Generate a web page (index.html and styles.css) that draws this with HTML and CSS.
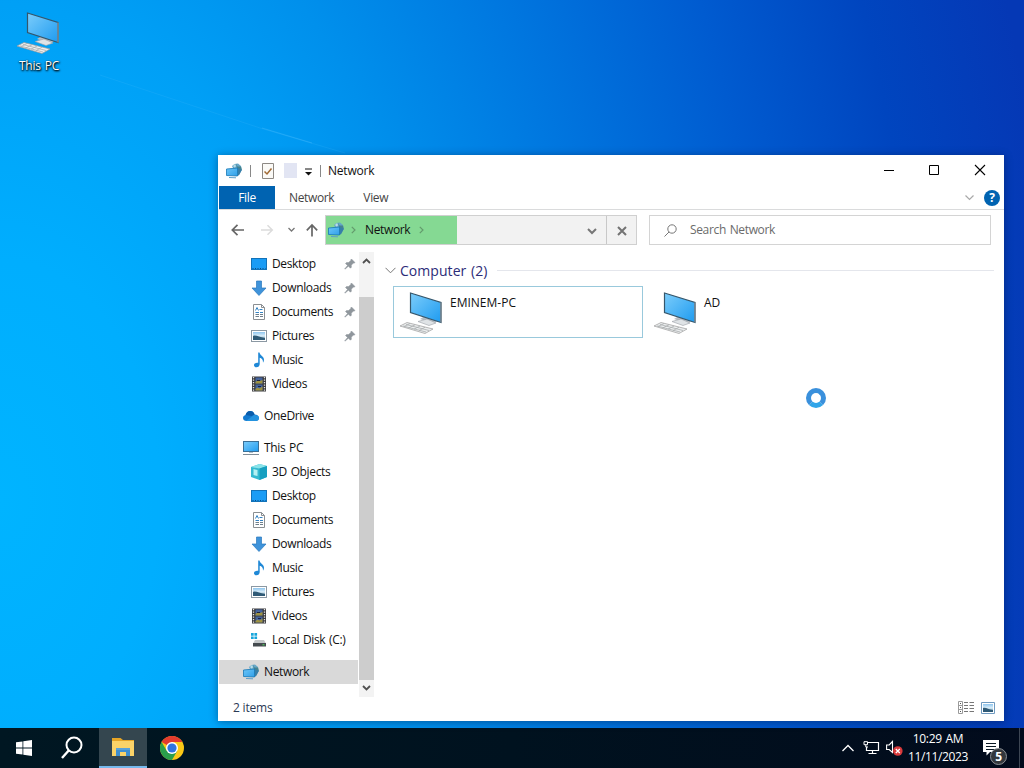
FILE: index.html
```html
<!DOCTYPE html>
<html lang="en">
<head>
  <meta charset="utf-8">
  <title>Network</title>
  <link rel="stylesheet" href="styles.css">
</head>
<body>
  <!-- shared icons -->
  <svg class="defs" width="0" height="0">
    <defs>
      <linearGradient id="screen" x1="0" y1="0" x2="1" y2="1">
        <stop offset="0" stop-color="#7ccdfb"/>
        <stop offset="1" stop-color="#1e9bf0"/>
      </linearGradient>
      <linearGradient id="glass" x1="0" y1="0" x2="1" y2="1">
        <stop offset="0" stop-color="#6cc6f8"/>
        <stop offset="1" stop-color="#2f9fe9"/>
      </linearGradient>
      <linearGradient id="sky" x1="0" y1="0" x2="0" y2="1">
        <stop offset="0" stop-color="#8fc5ee"/>
        <stop offset="0.5" stop-color="#dceffa"/>
        <stop offset="1" stop-color="#3c6f8c"/>
      </linearGradient>
    </defs>
    <symbol id="i-pc" viewBox="0 0 44 44">
      <path d="M20 28l13 4.500 4-2-13-5z" fill="#b9bfc5"/>
      <path d="M18 30.500l11 4 7-2.500-9-4z" fill="#dfe3e6" stroke="#9aa0a6" stroke-width=".6"/>
      <path d="M0 35l7-3.500 26 6.500-8 4.500z" fill="#eceeef" stroke="#9b9b9b" stroke-width=".7"/>
      <path d="M3 35l23 6M6 33.500l23 6M10 32.500l-6 3M15 33.800l-6 3M20 35l-6 3.200M25 36.200l-6 3.500" stroke="#aaadaf" stroke-width=".8" fill="none"/>
      <path d="M10.500 2L41 11.500v20L10.500 21.500z" fill="url(#screen)" stroke="#35566b" stroke-width="1.200"/>
      <path d="M41 11.500v20" stroke="#7f8c94" stroke-width="1.400"/>
    </symbol>
    <symbol id="i-network" viewBox="0 0 16 16">
      <path d="M6 3l2.500-2L12 .5 15 3l.8 4-2.800 4.500L9 9z" fill="#66a7c8"/>
      <path d="M10 .5l1.500 3L15 3.500l.8 3.500-2.800 1-2-3z" fill="#46848f"/>
      <path d="M7 3l2-2 1 2-1 2z" fill="#b9dde8"/>
      <path d="M11.500 4.500L15.800 7l-2.600 5-1.700 1z" fill="#377fa9"/>
      <path d="M.5 6l11-1v8l-11-.5z" fill="url(#glass)" stroke="#1677b5" stroke-width=".8"/>
      <path d="M3 14.500l7 .3" stroke="#5d9fc9" stroke-width="1"/>
    </symbol>
    <symbol id="i-desktop" viewBox="0 0 16 16">
      <rect x=".5" y="2.500" width="15" height="11" fill="#1a9cf5" stroke="#1272b8"/>
      <path d="M1.500 12.500h13" stroke="#0c4f86" stroke-dasharray="1 1.500"/>
    </symbol>
    <symbol id="i-downloads" viewBox="0 0 16 16">
      <path d="M5.500 1h5v7H15l-7 7.500L1 8h4.500z" fill="#3f93da" stroke="#2a79bd" stroke-width=".7"/>
    </symbol>
    <symbol id="i-documents" viewBox="0 0 16 16">
      <path d="M2.500.5h8l3 3v12h-11z" fill="#fff" stroke="#8b8f92"/>
      <path d="M10.500.5v3h3" fill="none" stroke="#8b8f92"/>
      <path d="M4.500 6.500L6 3.500l1.500 3M8.500 5.500h3M4.500 8.500h3.500M9 8.500h3" stroke="#3383c4" fill="none"/>
      <path d="M4.500 10.500h3.500M9 10.500h3M4.500 12.500h3.500M9 12.500h3" stroke="#6f7f8b" fill="none"/>
    </symbol>
    <symbol id="i-pictures" viewBox="0 0 16 16">
      <rect x=".5" y="2.500" width="15" height="11" fill="#fff" stroke="#8b98a3"/>
      <rect x="2" y="4" width="12" height="8" fill="url(#sky)"/>
      <path d="M2 8c3-1.500 6 1.500 12 2v2H2z" fill="#2f5a76"/>
    </symbol>
    <symbol id="i-music" viewBox="0 0 16 16">
      <path d="M7.200.5h1.300c.5 3 4.500 3.700 4.500 7.300 0 1.200-.5 2.200-1 2.900.3-3-1.400-4.400-3.300-5V12c0 2-1.500 3.300-3.200 3.300-1.500 0-2.500-.9-2.500-2.100 0-1.700 2-2.900 4.200-2.400z" fill="#1f88d6"/>
    </symbol>
    <symbol id="i-videos" viewBox="0 0 16 16">
      <path d="M1 .5h14v15H1z" fill="#3a3a3c"/>
      <path d="M2.500 1v14M13.500 1v14" stroke="#e6e6e6" stroke-width="1.300" stroke-dasharray="1.300 1.200"/>
      <path d="M4.500 1.500h7v6h-7zM4.500 8.500h7v6h-7z" fill="#43629d"/>
      <path d="M4.500 6l3-2.500 1.500 1.500 2.500-1v3.500h-7zM4.500 13l2-1.500 2 1 3-2v4h-7z" fill="#a09340"/>
      <path d="M6 4.500h3M7 10.500h3" stroke="#1b2340"/>
    </symbol>
    <symbol id="i-onedrive" viewBox="0 0 16 16">
      <path d="M3.500 13C1.500 13 0 11.600 0 9.900c0-1.500 1-2.700 2.600-3C3.300 4.700 5 3 7.200 3c2 0 3.700 1.200 4.400 3.400 2.500 0 4.400 1.400 4.400 3.500 0 1.800-1.400 3.100-3.300 3.100z" fill="#1279cf"/>
      <path d="M2.600 6.900C3.300 4.700 5 3 7.200 3c2 0 3.700 1.200 4.400 3.400L8.500 8z" fill="#0a5cab"/>
      <path d="M3 12.900L11 7c3 0 5 1 5 3 0 1.700-1.400 3-3.300 3H3.500z" fill="#2493df"/>
    </symbol>
    <symbol id="i-thispc" viewBox="0 0 16 16">
      <rect x=".5" y="1.500" width="15" height="10" fill="url(#screen)" stroke="#3a6f96"/>
      <path d="M6 12h4v1H6z" fill="#b0bfca"/>
      <path d="M0 14.500h16" stroke="#7f8c96"/>
    </symbol>
    <symbol id="i-objects" viewBox="0 0 16 16">
      <path d="M0 3L8.500 0 16 2v11l-7.500 3L0 13z" fill="#35bad0"/>
      <path d="M0 3L8.500 0 16 2 8.500 4.500z" fill="#8be4ea"/>
      <path d="M8.500 4.500L16 2v11l-7.500 3z" fill="#169fc0"/>
      <path d="M2.500 5l4 1v6l-4-1z" fill="#b5f0f2"/>
    </symbol>
    <symbol id="i-disk" viewBox="0 0 16 16">
      <path d="M0 1h2.700v2.700H0zM3.400 1h2.700v2.700H3.400zM0 4.400h2.700v2.700H0zM3.400 4.400h2.700v2.700H3.400z" fill="#18a6dc"/>
      <path d="M4 8h9l2 3.500H2z" fill="#c4c8ca"/>
      <path d="M2 11h13v3.500H2z" fill="#454b4f"/>
      <path d="M11.500 12.800h2" stroke="#4fe05d"/>
    </symbol>
    <symbol id="i-pin" viewBox="0 0 12 12">
      <path d="M7.500 1L11 4.500l-1 .7-.6-.2L7.300 7.200l.1 2-1 1-2-2L1 11.200l-.3-.3L3.500 7.500l-2-2 1-1 2 .1L6.900 2.500l-.2-.6z" fill="#8f969c" stroke="#8f969c" stroke-width=".5"/>
    </symbol>
  </svg>

  <div class="desktop">
    <svg class="rays" viewBox="0 0 1024 728">
      <path d="M100 75L260 128L345 153" stroke="#5cc4ff" stroke-opacity=".14" fill="none"/>
      <path d="M262 128L312 143" stroke="#5cc4ff" stroke-opacity=".3" fill="none"/>
    </svg>
    <div class="shortcut">
      <svg width="44" height="44"><use href="#i-pc"/></svg>
      <span>This PC</span>
    </div>

    <div class="window">
      <div class="titlebar">
        <svg class="title-icon" width="16" height="16"><use href="#i-network"/></svg>
        <i class="sep"></i>
        <svg class="check" width="12" height="16" viewBox="0 0 12 16">
          <path d="M.5.500h11v15H.5z" fill="#fbfaf7" stroke="#8d8984"/>
          <path d="M2.500 8.500l2.500 2.500 4.500-5.500" fill="none" stroke="#a06a35" stroke-width="1.500"/>
        </svg>
        <i class="blank"></i>
        <svg class="more" width="7" height="8" viewBox="0 0 7 8"><path d="M0 1h7" stroke="#111"/><path d="M0 4h7L3.500 7.500z" fill="#111"/></svg>
        <i class="sep"></i>
        <span class="title">Network</span>
        <div class="controls">
          <svg width="46" height="31" viewBox="0 0 46 31"><path d="M18 15.500h10" stroke="#000"/></svg>
          <svg width="45" height="31" viewBox="0 0 45 31"><path d="M17.500 10.500h9v9h-9z" stroke="#000" fill="none"/></svg>
          <svg width="46" height="31" viewBox="0 0 46 31"><path d="M18 10l10 10M28 10L18 20" stroke="#000" stroke-width="1.100"/></svg>
        </div>
      </div>

      <div class="tabs">
        <span class="tab file">File</span>
        <span class="tab net">Network</span>
        <span class="tab view">View</span>
        <svg class="collapse" width="9" height="6" viewBox="0 0 9 6"><path d="M.5.500l4 4 4-4" fill="none" stroke="#a9a9a9" stroke-width="1.200"/></svg>
        <span class="help">?</span>
      </div>

      <div class="navbar">
        <svg class="arrows" width="107" height="30" viewBox="0 0 107 30">
          <path d="M13.500 15H25M18.500 9.800L13.300 15l5.200 5.200" fill="none" stroke="#666" stroke-width="1.700"/>
          <path d="M42 15h11M48.500 10.200L53.300 15l-4.800 4.800" fill="none" stroke="#dcdcdc" stroke-width="1.500"/>
          <path d="M69.500 13l3 3 3-3" fill="none" stroke="#777" stroke-width="1.300"/>
          <path d="M93 21.500V10M87.800 15.300L93 10l5.200 5.300" fill="none" stroke="#666" stroke-width="1.700"/>
        </svg>
        <div class="address">
          <div class="progress">
            <svg width="16" height="16"><use href="#i-network"/></svg>
            <svg class="crumb" width="5" height="8" viewBox="0 0 5 8"><path d="M.8.800L4 4 .8 7.200" fill="none" stroke="#639b6c" stroke-width="1.200"/></svg>
            <span>Network</span>
            <svg class="crumb" width="5" height="8" viewBox="0 0 5 8"><path d="M.8.800L4 4 .8 7.200" fill="none" stroke="#639b6c" stroke-width="1.200"/></svg>
          </div>
          <svg class="drop" width="10" height="7" viewBox="0 0 10 7"><path d="M1 1l4 4 4-4" fill="none" stroke="#777" stroke-width="2"/></svg>
          <div class="stop">
            <svg width="10" height="10" viewBox="0 0 10 10"><path d="M1 1l8 8M9 1L1 9" stroke="#737373" stroke-width="2"/></svg>
          </div>
        </div>
        <div class="search">
          <svg width="13" height="13" viewBox="0 0 13 13"><circle cx="8" cy="5" r="4.200" fill="none" stroke="#777"/><path d="M5 8L.5 12.500" stroke="#777"/></svg>
          <span>Search Network</span>
        </div>
      </div>

      <div class="main">
        <ul class="tree">
          <li class="sub"><svg><use href="#i-desktop"/></svg>Desktop<svg class="pin"><use href="#i-pin"/></svg></li>
          <li class="sub"><svg><use href="#i-downloads"/></svg>Downloads<svg class="pin"><use href="#i-pin"/></svg></li>
          <li class="sub"><svg><use href="#i-documents"/></svg>Documents<svg class="pin"><use href="#i-pin"/></svg></li>
          <li class="sub"><svg><use href="#i-pictures"/></svg>Pictures<svg class="pin"><use href="#i-pin"/></svg></li>
          <li class="sub"><svg><use href="#i-music"/></svg>Music</li>
          <li class="sub"><svg><use href="#i-videos"/></svg>Videos</li>
          <li class="root"><svg><use href="#i-onedrive"/></svg>OneDrive</li>
          <li class="root"><svg><use href="#i-thispc"/></svg>This PC</li>
          <li class="sub"><svg><use href="#i-objects"/></svg>3D Objects</li>
          <li class="sub"><svg><use href="#i-desktop"/></svg>Desktop</li>
          <li class="sub"><svg><use href="#i-documents"/></svg>Documents</li>
          <li class="sub"><svg><use href="#i-downloads"/></svg>Downloads</li>
          <li class="sub"><svg><use href="#i-music"/></svg>Music</li>
          <li class="sub"><svg><use href="#i-pictures"/></svg>Pictures</li>
          <li class="sub"><svg><use href="#i-videos"/></svg>Videos</li>
          <li class="sub"><svg><use href="#i-disk"/></svg>Local Disk (C:)</li>
          <li class="root selected"><svg><use href="#i-network"/></svg>Network</li>
        </ul>
        <div class="scrollbar">
          <svg width="9" height="6" viewBox="0 0 9 6"><path d="M1 5l3.500-3.500L8 5" fill="none" stroke="#505050" stroke-width="1.800"/></svg>
          <i class="thumb"></i>
          <svg width="9" height="6" viewBox="0 0 9 6"><path d="M1 1l3.500 3.500L8 1" fill="none" stroke="#505050" stroke-width="1.800"/></svg>
        </div>
        <div class="content">
          <div class="group">
            <svg width="11" height="7" viewBox="0 0 11 7"><path d="M.5.800l5 5 5-5" fill="none" stroke="#777"/></svg>
            <span>Computer (2)</span>
            <i class="rule"></i>
          </div>
          <div class="items">
            <div class="item focused">
              <svg width="44" height="44"><use href="#i-pc"/></svg>
              <span>EMINEM-PC</span>
            </div>
            <div class="item">
              <svg width="44" height="44"><use href="#i-pc"/></svg>
              <span>AD</span>
            </div>
          </div>
        </div>
      </div>

      <div class="status">
        <span>2 items</span>
        <svg class="details" width="16" height="13" viewBox="0 0 16 13">
          <path d="M.5.500h4v12h-4zM.5 4.500h4M.5 8.500h4" fill="none" stroke="#9a9a9a"/>
          <path d="M2 2.500h1M2 6.500h1M2 10.500h1" stroke="#555"/>
          <path d="M6 1.500h4M11.500 1.500H16M6 4.500h4M11.500 4.500H16M6 7.500h4M11.500 7.500H16M6 10.500h4M11.500 10.500H16" stroke="#777"/>
        </svg>
        <svg class="thumbs" width="14" height="12" viewBox="0 0 14 12">
          <path d="M.5.500h13v11H.5z" fill="#fff" stroke="#6f9ac0"/>
          <path d="M2 2h10v8H2z" fill="url(#sky)"/>
          <path d="M2 6c3-1 5 1.500 10 2v2H2z" fill="#2f5a76"/>
        </svg>
      </div>
    </div>
  </div>

  <div class="busy"></div>

  <div class="taskbar">
    <div class="task">
      <svg width="16" height="16" viewBox="0 0 16 16"><path d="M0 2.300L6.500 1.400v6.200H0zM7.300 1.300L16 0v7.600H7.300zM0 8.400h6.500v6.200L0 13.700zM7.300 8.400H16V16l-8.700-1.300z" fill="#fff"/></svg>
    </div>
    <div class="task">
      <svg width="24" height="24" viewBox="0 0 24 24"><circle cx="14" cy="9" r="7.500" fill="none" stroke="#fff" stroke-width="2"/><path d="M8.700 14.500L2 22" stroke="#fff" stroke-width="2.400"/></svg>
    </div>
    <div class="task active">
      <svg width="22" height="18" viewBox="0 0 22 18">
        <path d="M0 0h8.500L11 2h11v16H0z" fill="#e6a526"/>
        <path d="M0 3h22v15H0z" fill="#fbd368"/>
        <path d="M4 18v-8h14v8h-4v-4H8v4z" fill="#3f8fd0"/>
        <path d="M4 10h14v2H4z" fill="#5aa2d8"/>
      </svg>
    </div>
    <div class="task chrome">
      <svg width="24" height="24" viewBox="0 0 24 24">
        <circle cx="12" cy="12" r="12" fill="#fbc816"/>
        <path d="M12 12L1.600 6A12 12 0 0 1 22.400 6H12z" fill="#e33b2e"/>
        <path d="M1.600 6A12 12 0 0 0 12 24l5.200-9L12 12 6.800 15z" fill="#2a9f4b"/>
        <circle cx="12" cy="12" r="6" fill="#fff"/>
        <circle cx="12" cy="12" r="4.600" fill="#2f74e0"/>
      </svg>
    </div>
    <div class="tray">
      <svg class="up" width="12" height="8" viewBox="0 0 12 8"><path d="M.5 7L6 1.500 11.500 7" fill="none" stroke="#fff" stroke-width="1.300"/></svg>
      <svg class="lan" width="17" height="14" viewBox="0 0 17 14">
        <path d="M5 1.500h10.500v8h-12V6M9.500 9.500v3M5.500 12.500h8" fill="none" stroke="#fff" stroke-width="1.200"/>
        <path d="M1 .700h3.500v3H1zM2.800 3.700V6H5" fill="none" stroke="#fff"/>
      </svg>
      <svg class="sound" width="17" height="16" viewBox="0 0 17 16">
        <path d="M.6 5h2.600L6.500 1.500v11L3.200 9.500H.6z" fill="none" stroke="#fff" stroke-width="1.100"/>
        <circle cx="11.800" cy="11" r="4.800" fill="#d93a3c"/>
        <path d="M9.800 9l4 4M13.800 9l-4 4" stroke="#fff" stroke-width="1.300"/>
      </svg>
      <div class="clock"><span>10:29 AM</span><span>11/11/2023</span></div>
      <div class="notify">
        <svg width="16" height="16" viewBox="0 0 16 16"><path d="M0 0h16v12H7l-3.500 3.500V12H0z" fill="#fff"/><path d="M3 3.500h10M3 6.500h10M3 9.500h10" stroke="#0a1824"/></svg>
        <span class="count">5</span>
      </div>
      <i class="peek"></i>
    </div>
  </div>
</body>
</html>
```

FILE: styles.css
```css
* {
  box-sizing: border-box;
  margin: 0;
  padding: 0;
}

body {
  width: 1024px;
  height: 768px;
  overflow: hidden;
  position: relative;
  font-family: "Open Sans", "Noto Sans", sans-serif;
  font-size: 12px;
  letter-spacing: -0.35px;
  word-spacing: 1px;
  color: #111;
}

svg {
  display: block;
  flex-shrink: 0;
}

.defs {
  position: absolute;
}

.desktop {
  position: relative;
  height: 728px;
  background: radial-gradient(ellipse 1060px 1600px at 0 500px, #00b4ff 0%, #00aefe 15%, #00a0f6 31%, #0090ec 42%, #0078e0 56%, #005bd0 73%, #0045bf 87%, #0538b5 100%);
}

.rays {
  position: absolute;
  top: 0;
  left: 0;
  width: 1024px;
  height: 728px;
}

.shortcut {
  position: absolute;
  top: 11px;
  left: 2px;
  width: 74px;
  display: flex;
  flex-direction: column;
  align-items: center;
  color: #fff;
  letter-spacing: -0.2px;
  text-shadow: 1px 1px 2px #000, 0 1px 2px rgba(0, 0, 0, 0.8), 0 0 1px rgba(0, 0, 0, 0.6);
}

.shortcut span {
  line-height: 16px;
  margin-top: 3px;
}

.window {
  position: absolute;
  top: 155px;
  left: 218px;
  width: 786px;
  height: 566px;
  display: flex;
  flex-direction: column;
  padding-left: 1px;
  background: #fff;
  box-shadow: 0 1px 8px rgba(0, 20, 60, 0.45);
}

.titlebar {
  height: 31px;
  display: flex;
  align-items: center;
  padding-left: 7px;
}

.sep {
  width: 1px;
  height: 12px;
  background: #888;
}

.title-icon {
  margin-right: 8px;
}

.check {
  margin-left: 11px;
}

.blank {
  width: 13px;
  height: 15px;
  margin-left: 10px;
  background: #e2e5f3;
}

.more {
  margin: 2px 8px 0 8px;
}

.title {
  margin-left: 7px;
  letter-spacing: -0.2px;
}

.controls {
  display: flex;
  margin-left: auto;
  margin-right: 1px;
}

.tabs {
  height: 24px;
  display: flex;
  align-items: center;
  border-bottom: 1px solid #dadbdc;
  color: #444;
}

.file {
  width: 56px;
  height: 23px;
  line-height: 23px;
  text-align: center;
  background: #0063b1;
  color: #fff;
}

.net {
  margin-left: 14px;
}

.view {
  margin-left: 29px;
}

.collapse {
  margin-left: auto;
}

.help {
  width: 16px;
  height: 16px;
  margin: 0 4px 0 10px;
  border-radius: 50%;
  background: #0063b1;
  color: #fff;
  font-weight: bold;
  line-height: 16px;
  text-align: center;
}

.navbar {
  height: 42px;
  display: flex;
  align-items: center;
  padding: 0 13px 2px 0;
  line-height: 28px;
}

.arrows {
  margin-right: -1px;
}

.address {
  width: 312px;
  height: 30px;
  display: flex;
  align-items: center;
  border: 1px solid #d0d0d0;
  background: #f2f2f2;
}

.progress {
  width: 131px;
  height: 28px;
  display: flex;
  align-items: center;
  padding-left: 2px;
  background: #85d993;
}

.progress span {
  margin: 0 9px;
}

.progress svg + .crumb {
  margin-left: 7px;
}

.drop {
  margin-top: 2px;
  margin-left: auto;
  margin-right: 9px;
}

.stop {
  width: 30px;
  height: 28px;
  display: flex;
  align-items: center;
  justify-content: center;
  padding-top: 2px;
  border-left: 1px solid #c8c8c8;
}

.search {
  flex: 1;
  height: 30px;
  display: flex;
  align-items: center;
  gap: 13px;
  margin-left: 12px;
  padding-left: 14px;
  border: 1px solid #d4d4d4;
  color: #6b6b6b;
}

.main {
  height: 445px;
  display: flex;
}

.tree {
  width: 139px;
  list-style: none;
}

.tree li {
  height: 24px;
  display: flex;
  align-items: center;
  line-height: 24px;
  padding-left: 32px;
  white-space: nowrap;
}

.tree li svg {
  width: 16px;
  height: 16px;
  margin-right: 5px;
}

.tree li.root {
  margin-top: 8px;
  padding-left: 24px;
}

.tree li.selected {
  background: #d9d9d9;
}

.tree li .pin {
  width: 12px;
  height: 12px;
  margin-left: auto;
  margin-right: 2px;
}

.scrollbar {
  width: 15px;
  margin-left: 1px;
  display: flex;
  flex-direction: column;
  align-items: center;
  justify-content: space-between;
  padding: 6px 0;
  background: #f3f3f3;
}

.thumb {
  width: 15px;
  height: 383px;
  margin-top: 27px;
  background: #cdcdcd;
}

.content {
  flex: 1;
  padding: 7px 10px 0 11px;
}

.group {
  height: 22px;
  display: flex;
  align-items: center;
  gap: 4px;
  font-size: 14px;
  letter-spacing: 0.05px;
  color: #2c2c78;
}

.rule {
  flex: 1;
  height: 1px;
  margin-left: 6px;
  background: #e4e6ec;
}

.items {
  display: flex;
  gap: 4px;
  margin: 5px 0 0 8px;
}

.item {
  width: 250px;
  height: 52px;
  display: flex;
  padding: 4px 6px;
  border: 1px solid transparent;
}

.item span {
  line-height: 16px;
  margin: 4px 0 0 6px;
  letter-spacing: 0;
}

.focused {
  border-color: #99c9dc;
}

.status {
  flex: 1;
  display: flex;
  align-items: center;
  padding: 0 9px 3px 14px;
  letter-spacing: -0.2px;
  word-spacing: 0;
  color: #2b3a55;
}

.details {
  margin-left: auto;
  margin-right: 7px;
}

/* loading cursor */
.busy {
  position: absolute;
  top: 388px;
  left: 806px;
  width: 20px;
  height: 20px;
  border: 5px solid #3a90dc;
  border-bottom-color: #31a5e9;
  border-radius: 50%;
}

.taskbar {
  height: 40px;
  display: flex;
  background: linear-gradient(90deg, #001722, #00121f 50%, #020b1c);
  color: #fff;
}

.task {
  width: 48px;
  height: 40px;
  display: flex;
  align-items: center;
  justify-content: center;
}

.active {
  margin-left: 3px;
  background: #34464f;
  border-bottom: 2px solid #76b9ed;
}

.chrome {
  margin-left: 1px;
}

.tray {
  display: flex;
  align-items: center;
  margin-left: auto;
}

.lan {
  margin-left: 9px;
}

.sound {
  margin-left: 6px;
}

.clock {
  width: 64px;
  margin-left: 3px;
  display: flex;
  flex-direction: column;
  align-items: center;
  line-height: 18px;
}

.notify {
  position: relative;
  margin-left: 13px;
}

.count {
  position: absolute;
  top: 8px;
  left: 7px;
  width: 17px;
  height: 17px;
  border: 1px solid #8b9096;
  border-radius: 50%;
  background: #33383d;
  font-weight: bold;
  line-height: 15px;
  text-align: center;
}

.peek {
  width: 1px;
  height: 40px;
  margin: 0 4px 0 20px;
  background: #3d4653;
}
```
